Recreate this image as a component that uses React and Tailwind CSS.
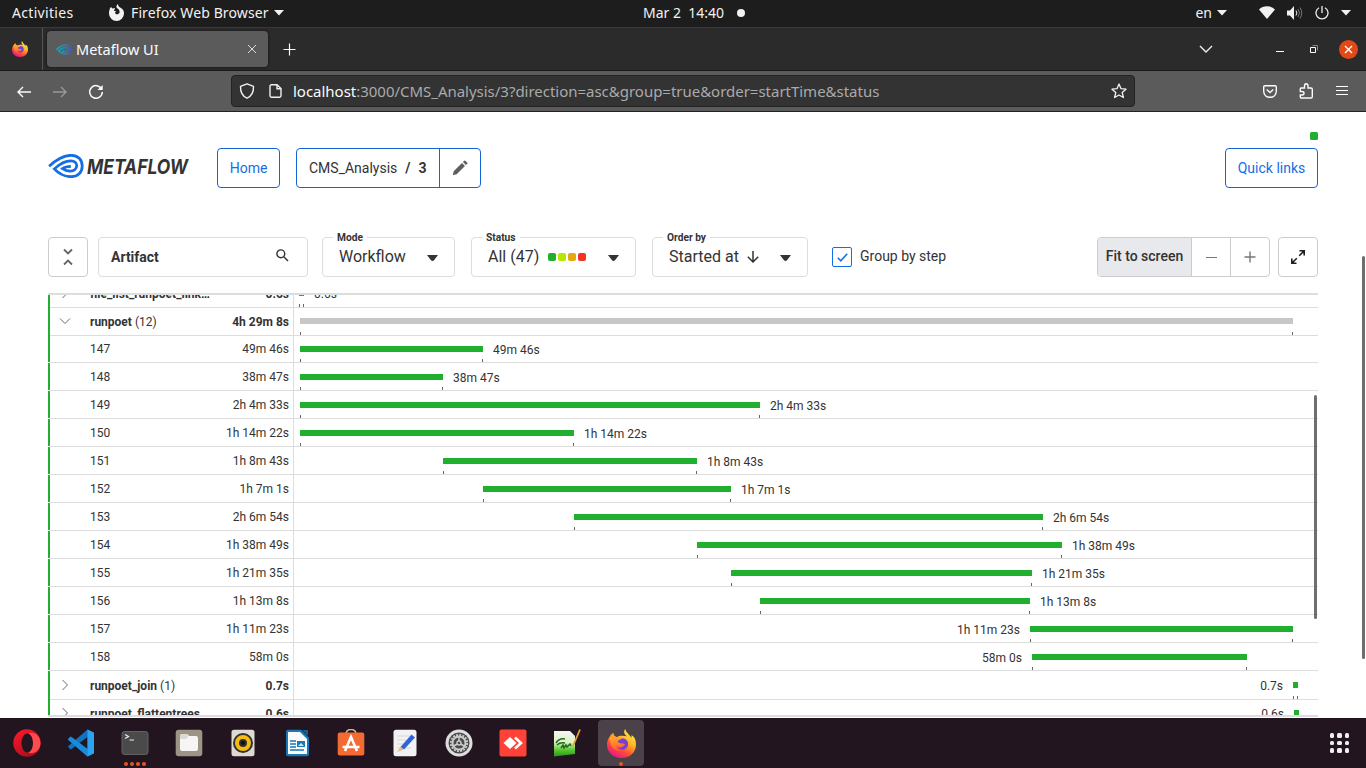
import React from "react";

const TASKS = [
  ["147", "49m 46s", 300, 483, 0],
  ["148", "38m 47s", 300, 443, 0],
  ["149", "2h 4m 33s", 300, 760, 0],
  ["150", "1h 14m 22s", 300, 574, 0],
  ["151", "1h 8m 43s", 443, 697, 0],
  ["152", "1h 7m 1s", 483, 731, 0],
  ["153", "2h 6m 54s", 574, 1043, 0],
  ["154", "1h 38m 49s", 697, 1062, 0],
  ["155", "1h 21m 35s", 731, 1032, 0],
  ["156", "1h 13m 8s", 760, 1030, 0],
  ["157", "1h 11m 23s", 1030, 1293, 1],
  ["158", "58m 0s", 1032, 1247, 1],
];

const ROWS = [
  { name: "file_list_runpoet_link…", dur: "0.6s", x0: 299, x1: 304, label: "0.6s", h: "h-[28px]", top: "pt-[10px]", text: "pt-[6px]", chev: "right", bold: true },
  { name: "runpoet", count: "(12)", dur: "4h 29m 8s", x0: 300, x1: 1293, h: "h-[28px]", top: "pt-[10px]", text: "pt-[6px]", chev: "down", bold: true, grey: true },
  ...TASKS.map(([name, dur, x0, x1, left], i) => ({
    name, dur, x0, x1, left: !!left, label: dur, task: true,
    h: i === 0 ? "h-[27px]" : "h-[28px]",
    top: i === 0 ? "pt-[10px]" : "pt-[11px]",
    text: i === 0 ? "pt-[5px]" : "pt-[6px]",
  })),
  { name: "runpoet_join", count: "(1)", dur: "0.7s", x0: 1293, x1: 1298, left: true, label: "0.7s", h: "h-[29px]", top: "pt-[11px]", text: "pt-[7px]", chev: "right", bold: true },
  { name: "runpoet_flattentrees", dur: "0.6s", x0: 1294, x1: 1299, left: true, label: "0.6s", h: "h-[28px]", top: "pt-[10px]", text: "pt-[6px]", chev: "right", bold: true },
];

function Chevron({ dir }) {
  return (
    <svg width="12" height="12" viewBox="0 0 12 12" fill="none" stroke="#6b6b6b" strokeWidth="1">
      {dir === "down" ? <path d="M1 3.5 6 8.5 11 3.5" /> : <path d="M3.5 1 8.5 6 3.5 11" />}
    </svg>
  );
}

function Row({ r }) {
  const label = r.label && <span className="-mt-[4px] block whitespace-nowrap text-[12px] leading-[16px] text-[#333]">{r.label}</span>;
  return (
    <div className={`flex shrink-0 ${r.h}`}>
      <div className={`w-[2px] shrink-0 bg-[#20af2e] ${r.task ? "mb-px" : ""}`} />
      <div className="flex min-w-0 flex-1 border-b border-[#ddd]">
        <div className={`flex w-[244px] shrink-0 border-r border-[#ddd] pr-[4px] text-[12px] leading-[16px] text-[#333] ${r.text}`}>
          <div className="flex w-[40px] shrink-0 pl-[9px] pt-[1px]">{r.chev && <Chevron dir={r.chev} />}</div>
          <div className="min-w-0 flex-1 whitespace-nowrap">
            <span className={r.bold ? "font-bold" : ""}>{r.name}</span>
            {r.count && <span> {r.count}</span>}
          </div>
          <div className={r.bold ? "font-bold" : ""}>{r.dur}</div>
        </div>
        <div className={`flex min-w-0 flex-1 ${r.top}`}>
          <div className={`flex shrink-0 justify-end ${r.left ? "pr-[10px]" : ""}`} style={{ width: r.x0 - 294 }}>{r.left && label}</div>
          <div className="flex shrink-0 flex-col justify-between" style={{ width: r.x1 - r.x0 }}>
            <div className={`h-[6px] ${r.grey ? "bg-[#c7c7c7]" : "bg-[#20af2e]"}`} />
            <div className="flex justify-between">
              <span className="h-[3px] w-px bg-[#666]" />
              <span className="h-[3px] w-px bg-[#666]" />
            </div>
          </div>
          {!r.left && <div className="flex items-start pl-[10px]">{label}</div>}
        </div>
      </div>
    </div>
  );
}

function Caret({ className = "" }) {
  return (
    <svg className={className} width="10" height="6" viewBox="0 0 10 6">
      <path d="M0 0h10L5 5.5z" fill="#f2f2f2" />
    </svg>
  );
}

function Firefox({ size }) {
  return (
    <svg width={size} height={size} viewBox="0 0 32 32">
      <defs>
        <linearGradient id="fx1" x1=".85" y1=".05" x2=".3" y2="1">
          <stop offset="0" stopColor="#fff44f" />
          <stop offset=".4" stopColor="#ffb021" />
          <stop offset=".7" stopColor="#ff4a3c" />
          <stop offset="1" stopColor="#e5158b" />
        </linearGradient>
        <linearGradient id="fx3" x1=".3" y1="0" x2=".5" y2="1">
          <stop offset="0" stopColor="#ffa828" />
          <stop offset="1" stopColor="#ff5a35" />
        </linearGradient>
      </defs>
      <path d="M20 0c-2 3-1 6 2 8-4-1-9-1-11 1-3-1-4-3-4-5C3 7 0 12 0 17c0 9 7 15 16 15s16-6 16-15c0-5-2-9-5-10v3c-2-4-6-6-7-10z" fill="url(#fx1)" />
      <circle cx="17" cy="16.500" r="6.300" fill="#7440d8" />
      <path d="M3 10c3-3 7-2 9 0 2-1 4-1 5 0-1 2-4 2-5 3 0 2 2 3 4 3 1 0 3 0 4 1-1 2-3 2-4 3-2 1-5 0-6-2 0 3 2 5 6 6-6 2-13-4-13-14z" fill="url(#fx3)" />
    </svg>
  );
}

function Swirl({ className, width, height, stroke, sw = 5.3 }) {
  return (
    <svg className={className} width={width} height={height} viewBox="0 0 108 74" fill="none" stroke={stroke} strokeWidth={sw}>
      <path d="M2 38C24 17 44 4 70 4c21 0 34 14 34 33S91 70 70 70C48 70 29 58 18 46 34 31 50 21 69 21c12 0 18 7 18 15.500S79 53 68 53c-10 0-18-3-25-8 8-6 15-7 26-7" />
    </svg>
  );
}

function TopBar() {
  return (
    <div className="flex h-[28px] items-center border-b border-[#3a3a3a] bg-[#1d1d1d] pb-[2px] font-['Noto_Sans',sans-serif] text-[14px] leading-[20px] text-[#f2f2f2]">
      <div className="w-[108px] pl-[12px] tracking-[0.32px]">Activities</div>
      <svg width="17" height="17" viewBox="0 0 17 17">
        <path fillRule="evenodd" d="M10 0c0 2 1 3 3 4 2 1 3 3 3 5.500A7.500 7.500 0 0 1 1 9.500C1 7 1.500 4.500 3 3l1.500 1.500L7 4 6 7h2L7 9c1 2 4 1.500 4.500-.5S10.500 5 9 4 9 1 10 0z" fill="#f2f2f2" />
      </svg>
      <div className="w-[142px] whitespace-nowrap pl-[6px] tracking-[0.12px]">Firefox Web Browser</div>
      <Caret className="ml-[7px]" />
      <div className="ml-[359px] whitespace-pre">Mar 2  14:40</div>
      <div className="ml-[13px] h-[8px] w-[8px] rounded-full bg-[#f2f2f2]" />
      <div className="ml-auto">en</div>
      <Caret className="ml-[5px]" />
      <svg className="ml-[32px]" width="16" height="13" viewBox="0 0 16 13"><path d="M8 13 0 3.500C4-.8 12-.8 16 3.500z" fill="#f2f2f2" /></svg>
      <svg className="ml-[12px]" width="16" height="14" viewBox="0 0 16 14" fill="none" stroke="#777">
        <path d="M0 4.500h3L7 0v14L3 9.500H0z" fill="#f2f2f2" stroke="none" />
        <path d="M9 4.500q1.800 2.500 0 5" stroke="#f2f2f2" /><path d="M11 3q3 4 0 8M13 1.500q3.500 5.500 0 11" />
      </svg>
      <svg className="ml-[12px]" width="14" height="14" viewBox="0 0 14 14" fill="none" stroke="#eee" strokeWidth="1.300"><path d="M4 1.700a6 6 0 1 0 6 0M7 0v7" /></svg>
      <Caret className="ml-[12px] mr-[15px]" />
    </div>
  );
}

function Browser() {
  return (
    <>
      <div className="flex h-[43px] items-center border-b border-[#191919] bg-[#2b2b2b] font-['Noto_Sans',sans-serif] text-[#fbfbfe]">
        <div className="flex h-full w-[43px] items-center border-r border-[#555] pl-[12px]"><Firefox size={16} /></div>
        <div className="ml-[4px] flex h-[36px] w-[221px] items-center rounded-[4px] bg-[#5b5b5b] pl-[9px] pr-[11px] shadow-[0_0_3px_#111]">
          <svg width="15" height="11" viewBox="0 0 108 74" fill="none" stroke="url(#tabSwirl)" strokeWidth="10">
            <defs><linearGradient id="tabSwirl"><stop offset="0" stopColor="#12abb5" /><stop offset=".6" stopColor="#1c8fc4" /><stop offset="1" stopColor="#3d5be0" /></linearGradient></defs>
            <path d="M2 38C24 17 44 5 70 5c21 0 33 14 33 32S91 69 70 69C48 69 29 58 18 46 34 31 50 23 69 23c12 0 16 6 16 14s-6 14-17 14c-10 0-18-2-25-6" />
          </svg>
          <span className="ml-[5px] text-[14.500px] leading-[20px]">Metaflow UI</span>
          <svg className="ml-auto" width="10" height="10" viewBox="0 0 10 10" stroke="#ddd" strokeWidth="1"><path d="m1 1 8 8M9 1 1 9" /></svg>
        </div>
        <svg className="ml-[15px]" width="13" height="13" viewBox="0 0 13 13" stroke="#fff" strokeWidth="1.200"><path d="M6.500.5v12M.5 6.500h12" /></svg>
        <svg className="ml-auto" width="14" height="8" viewBox="0 0 14 8" fill="none" stroke="#eee" strokeWidth="1.400"><path d="m1 1 6 6 6-6" /></svg>
        <div className="ml-[63px] mt-[4px] h-px w-[8px] bg-white" />
        <svg className="ml-[26px]" width="9" height="9" viewBox="0 0 9 9" fill="none"><path d="M.5 2.500h5v5h-5z" stroke="#fff" /><path d="M2.500.5h5v5" stroke="#888" /></svg>
        <div className="ml-[20px] mr-[8px] flex h-[19px] w-[19px] items-center justify-center rounded-full bg-[#e14a17]">
          <svg width="9" height="9" viewBox="0 0 9 9" stroke="#fff" strokeWidth="1.400"><path d="m1 1 7 7M8 1 1 8" /></svg>
        </div>
      </div>
      <div className="flex h-[41px] items-center border-b border-[#222] bg-[#5b5b5b]">
        <svg className="ml-[17px] mt-px" width="14" height="12" viewBox="0 0 14 12" fill="none" stroke="#fbfbfe" strokeWidth="1.400"><path d="M14 6H1M6 1 1 6l5 5" /></svg>
        <svg className="ml-[22px] mt-px" width="14" height="12" viewBox="0 0 14 12" fill="none" stroke="#999" strokeWidth="1.400"><path d="M0 6h13M8 1l5 5-5 5" /></svg>
        <svg className="ml-[21px] mt-px" width="16" height="16" viewBox="0 0 16 16" fill="none" stroke="#fbfbfe" strokeWidth="1.500"><path d="M13.600 5A6.300 6.300 0 1 0 14.300 8" /><path d="M14.700 1v5H9.500z" fill="#fbfbfe" stroke="none" /></svg>
        <div className="ml-[127px] flex h-[32px] w-[904px] items-center rounded-[4px] border border-[#222] bg-[#333] pl-[7px] pr-[7px] font-['Noto_Sans',sans-serif] text-[15px] leading-[20px] text-[#aaa]">
          <svg width="16" height="16" viewBox="0 0 16 16" fill="none" stroke="#f0f0f0" strokeWidth="1.400"><path d="M8 .8 14.500 3.300C14.700 9 12 13.500 8 15.200 4 13.500 1.300 9 1.500 3.300z" strokeLinejoin="round" /></svg>
          <svg className="ml-[14px]" width="13" height="14" viewBox="0 0 13 14" fill="none" stroke="#f0f0f0" strokeWidth="1.400"><path d="M8 .8H2.500Q1 .8 1 2.300v9.500q0 1.400 1.500 1.400h8q1.500 0 1.500-1.400V4.500zM8 .8v4h4" /></svg>
          <div className="ml-[11px] whitespace-nowrap tracking-[-0.02px]"><span className="text-[#fbfbfe]">localhost</span>:3000/CMS_Analysis/3?direction=asc&amp;group=true&amp;order=startTime&amp;status</div>
          <svg className="ml-auto" width="16" height="16" viewBox="0 0 16 16" fill="none" stroke="#f0f0f0" strokeWidth="1.300" strokeLinejoin="round"><path d="m8 1 2 4.700 5 .5-3.800 3.300 1.200 5L8 12l-4.400 2.500 1.200-5L1 6.200l5-.5z" /></svg>
        </div>
        <svg className="ml-auto" width="14" height="13" viewBox="0 0 14 13" fill="none" stroke="#fbfbfe" strokeWidth="1.400"><path d="M2 .7h10q1.300 0 1.300 1.300v4C13.300 10 10.500 12.300 7 12.300S.7 10 .7 6V2Q.7.700 2 .7zM3.700 4.500 7 7.500l3.300-3" /></svg>
        <svg className="ml-[22px]" width="15" height="16" viewBox="0 0 15 16" fill="none" stroke="#fbfbfe" strokeWidth="1.400"><path d="M2 5h3.500V3Q5.500.8 7.200.8T9 3v2h3q1.300 0 1.300 1.300v7.500q0 1.200-1.300 1.200H2.500q-1.200 0-1.200-1.200V12h1.500Q5 12 5 10.200T2.800 8.500H1.300V6Q1.300 5 2 5z" /></svg>
        <div className="-mt-px ml-[22px] mr-[18px] flex w-[12px] flex-col gap-[3px]">
          <div className="h-px bg-white" /><div className="h-px bg-white" /><div className="h-px bg-white" />
        </div>
      </div>
    </>
  );
}

function Header() {
  return (
    <div className="flex h-[40px] shrink-0 items-center text-[14px]">
      <Swirl className="-mt-[4px]" width={36} height={24} stroke="#146ee6" sw={8.5} />
      <div className="-mt-[4px] ml-[3px] flex h-[24px] w-[102px] items-center">
        <svg width="102" height="24" viewBox="0 0 102 24">
          <text x="0" y="19.500" textLength="101" lengthAdjust="spacingAndGlyphs" fontFamily="Inter, sans-serif" fontSize="20.500" fontWeight="700" fontStyle="italic" fill="#333">METAFLOW</text>
        </svg>
      </div>
      <div className="ml-[28px] flex h-[40px] w-[63px] items-center justify-center rounded-[4px] border border-[#1464d6] text-[#146ee6]">Home</div>
      <div className="ml-[16px] flex h-[40px] w-[185px] rounded-[4px] border border-[#1464d6] text-[#333]">
        <div className="flex w-[143px] items-center whitespace-pre border-r border-[#1464d6] pl-[12px]">CMS_Analysis<span className="ml-[8px] font-bold">/</span><span className="ml-[8px] font-bold">3</span></div>
        <div className="flex flex-1 items-center justify-center">
          <svg width="16" height="16" viewBox="0 0 16 16" fill="#5f5f5f"><path d="M.8 15.200l.9-4L10 3l3 3-8.300 8.200zM10.900 2.100 12.300.700q.5-.5 1 0l2 2q.5.500 0 1l-1.400 1.400z" /></svg>
        </div>
      </div>
      <div className="ml-auto flex h-[40px] w-[93px] items-center justify-center rounded-[4px] border border-[#1464d6] text-[#146ee6]">Quick links</div>
    </div>
  );
}

function Field({ title, width, children, ml }) {
  return (
    <div className={`relative h-[40px] rounded-[4px] border border-[#ddd] ${width} ${ml}`}>
      <span className="absolute -top-[7px] left-[10px] bg-white px-[4px] text-[10.200px] font-bold leading-[14px] text-[#333]">{title}</span>
      <div className="flex h-[38px] items-center pl-[16px] pr-[16px] text-[16px] text-[#333]">
        {children}
        <svg className="ml-auto mt-[2px]" width="11" height="6" viewBox="0 0 11 6"><path d="M0 0h11L7 5.300q-1.500 1.200-3 0z" fill="#333" /></svg>
      </div>
    </div>
  );
}

function Filters() {
  return (
    <div className="mt-[49px] flex h-[40px] shrink-0 items-center">
      <div className="flex h-[40px] w-[40px] items-center justify-center rounded-[4px] border border-[#ccc]">
        <svg width="10" height="18" viewBox="0 0 10 18" fill="none" stroke="#666" strokeWidth="1.800"><path d="m1 1.500 4 4 4-4M1 16.500l4-4 4 4" /></svg>
      </div>
      <div className="ml-[10px] flex h-[40px] w-[210px] items-center justify-between rounded-[4px] border border-[#ddd] pl-[12px] pr-[18px] text-[14px] font-bold text-[#333]">
        Artifact
        <svg className="-mt-[3px]" width="13" height="13" viewBox="0 0 13 13" fill="none" stroke="#333" strokeWidth="1.400"><circle cx="4.800" cy="4.800" r="3.900" /><path d="m7.800 7.800 4.200 4.200" /></svg>
      </div>
      <Field title="Mode" width="w-[133px]" ml="ml-[14px]">Workflow</Field>
      <Field title="Status" width="w-[165px]" ml="ml-[16px]">
        All (47)
        <div className="ml-[9px] flex gap-[2px]">
          <i className="h-[8px] w-[8px] rounded-[2px] bg-[#20af2e]" />
          <i className="h-[8px] w-[8px] rounded-[2px] bg-[#b9e600]" />
          <i className="h-[8px] w-[8px] rounded-[2px] bg-[#e6a80c]" />
          <i className="h-[8px] w-[8px] rounded-[2px] bg-[#ee3524]" />
        </div>
      </Field>
      <Field title="Order by" width="w-[156px]" ml="ml-[16px]">
        Started at
        <svg className="ml-[8px]" width="12" height="12" viewBox="0 0 12 12" fill="none" stroke="#333" strokeWidth="1.500"><path d="M6 0v11M.8 5.800 6 11l5.200-5.200" /></svg>
      </Field>
      <div className="ml-[24px] flex h-[20px] w-[20px] items-center justify-center rounded-[2px] border border-[#146ee6]">
        <svg width="11" height="9" viewBox="0 0 11 9" fill="none" stroke="#146ee6" strokeWidth="1.600"><path d="m.8 4.800 3 3 6.400-7" /></svg>
      </div>
      <div className="-mt-[2px] ml-[8px] text-[14px] text-[#333]">Group by step</div>
      <div className="ml-auto flex h-[40px] w-[173px] overflow-hidden rounded-[4px] border border-[#ccc] text-[14px] text-[#333]">
        <div className="flex w-[94px] items-center justify-center border-r border-[#ccc] bg-[#e8e9ed] pb-[2px] font-medium">Fit to screen</div>
        <div className="flex w-[39px] items-center justify-center border-r border-[#ccc]"><div className="h-px w-[11px] bg-[#777]" /></div>
        <div className="flex flex-1 items-center justify-center"><svg width="12" height="12" viewBox="0 0 12 12" stroke="#777" strokeWidth="1.400"><path d="M6 .5v11M.5 6h11" /></svg></div>
      </div>
      <div className="ml-[8px] flex h-[40px] w-[40px] items-center justify-center rounded-[4px] border border-[#ccc]">
        <svg width="14" height="14" viewBox="0 0 14 14" fill="none" stroke="#222" strokeWidth="1.600"><path d="M8.500.8h4.700v4.700M.8 8.500v4.700h4.700M13 1 8.200 5.800M1 13l4.800-4.800" /><path d="M10 .500h3.500v3.500zM.5 10v3.500h3.500z" fill="#222" stroke="none" /></svg>
      </div>
    </div>
  );
}

const S = (p) => <svg width="28" height="28" viewBox="0 0 28 28" {...p} />;

function Dock() {
  return (
    <div className="flex h-[50px] shrink-0 items-start bg-[#23151f] pl-[4px]">
      <div className="flex pt-[2px]">
        <Slot>
          <S>
            <defs><linearGradient id="op" x1="0" y1="0" x2=".6" y2="1"><stop offset="0" stopColor="#ff1b2d" /><stop offset="1" stopColor="#b00c1c" /></linearGradient></defs>
            <path fillRule="evenodd" d="M14 .3a13.700 13.700 0 1 0 0 27.400A13.700 13.700 0 0 0 14 .3zM14.500 4.500c3.300 0 5.500 4 5.500 9.500s-2.200 9.500-5.500 9.500S8.500 19.500 8.500 14s2.700-9.500 6-9.500z" fill="url(#op)" />
            <path d="M15 4.500c5-2.500 12.500 1.500 12.500 9.500S20 26 15 23.500c3-.5 5-4.500 5-9.500s-2-9-5-9.500z" fill="#ff4a4e" />
          </S>
        </Slot>
        <Slot>
          <S>
            <path d="M20.500.5 27 3.800v20.400l-6.500 3.300L.8 10.500 3 8q.7-.6 1.500 0l16 12V8l-16 12q-.8.600-1.500 0L.8 17.500z" fill="#0f74bd" />
            <path d="M20.500 27.500.8 10.500 3 8q.7-.6 1.500 0l16 12z" fill="#1a8bd8" />
            <path d="M20.500.5 27 3.800v20.400l-6.500 3.300z" fill="#2aa3f0" />
          </S>
        </Slot>
        <Slot dots={4}><S><rect x="1" y="2.500" width="26" height="23" rx="2.500" fill="#4a4a4a" stroke="#626262" /><path d="m4 5.500 3.500 2L4 9.500M8.500 11h4.500" fill="none" stroke="#eee" strokeWidth="1.200" /></S></Slot>
        <Slot><S><rect x=".7" y=".7" width="26.600" height="26.600" rx="3" fill="#9c9484" /><path d="M5 7q0-2 2-2h5l2 2h7q2 0 2 2v11q0 2-2 2H7q-2 0-2-2z" fill="#f6f5f3" /><path d="M5 10V7q0-2 2-2h5l1 3-2 2z" fill="#ddd9d2" /></S></Slot>
        <Slot><S><rect x="2.500" y=".7" width="23" height="26.600" rx="2.500" fill="#dedad2" /><circle cx="14" cy="14" r="10" fill="#303030" /><circle cx="14" cy="14" r="6" fill="none" stroke="#f5bd12" strokeWidth="4" /><circle cx="14" cy="14" r="2" fill="#111" /></S></Slot>
        <Slot><S><path d="M5 .7h13l8 8v16.600q0 2-2 2H5q-2 0-2-2V2.700q0-2 2-2z" fill="#1878b8" /><path d="M5 3h12l7 7v15H5z" fill="#fafafa" /><path d="M19 1h6v6z" fill="#125f94" /><path d="M7 12h6M7 15h6M7 18h6M7 21h14" stroke="#1878b8" strokeWidth="1.500" /><rect x="14" y="12" width="8" height="6" fill="#1878b8" /><path d="m15 17 3-3 3 3z" fill="#ddd" /></S></Slot>
        <Slot><S><path d="M9 5.500q0-5 5-5t5 5" fill="none" stroke="#cdb594" strokeWidth="1.500" /><rect x=".7" y="3.500" width="26.600" height="23" rx="2" fill="#f36a32" /><path d="m8 22 6-14 6 14M5.500 18h17" fill="none" stroke="#fff" strokeWidth="2.600" /></S></Slot>
        <Slot><S><rect x="2.500" y=".7" width="23" height="26.600" rx="2.500" fill="#f2f2f2" /><path d="M6 7h13M6 11h12M6 15h10M6 19h14" stroke="#d8d8d8" /><path d="m9.500 18 11-12.500 3.500 3L13 20.500z" fill="#2f63d8" /><path d="M9.500 18 6 23l7-2.500z" fill="#e6bd90" /></S></Slot>
        <Slot><S><circle cx="14" cy="14" r="13.500" fill="#dedede" /><circle cx="14" cy="14" r="10.500" fill="#4a4a4a" /><circle cx="14" cy="14" r="8.200" fill="none" stroke="#ccc" strokeWidth="1.800" strokeDasharray="2 1.220" /><circle cx="14" cy="14" r="6.500" fill="none" stroke="#ccc" strokeWidth="2" /><path d="M14 14V7.500M14 14l5.600 3.250M14 14l-5.600 3.250" stroke="#ccc" strokeWidth="1.500" /><circle cx="14" cy="14" r="2.700" fill="#ccc" /><circle cx="14" cy="14" r="1.300" fill="#4a4a4a" /></S></Slot>
        <Slot><S><rect x=".5" y=".5" width="27" height="27" rx="2" fill="#ff4238" /><path d="m4.500 14 6.500-6 6.500 6-6.500 6z" fill="#fff" /><path d="m16 8.500 6 5.500-6 5.500" fill="none" stroke="#fff" strokeWidth="2.600" /></S></Slot>
        <Slot>
          <S>
            <defs><linearGradient id="npp" x2="0" y2="1"><stop offset="0" stopColor="#f4f6f0" /><stop offset=".45" stopColor="#dff0c8" /><stop offset=".75" stopColor="#58c62c" /><stop offset="1" stopColor="#2b9420" /></linearGradient></defs>
            <path d="M1 2h16l5 5v18L1 27.500z" fill="url(#npp)" />
            <path d="M3 14q3-5 9-4M4 16q3-3 8-2M8 19l2-3 1 3 2-3 1 2 3-3 1 2" fill="none" stroke="#1f6b18" strokeWidth="1.500" />
            <path d="M20 17 27 .5" stroke="#dfa12c" strokeWidth="1.800" />
          </S>
        </Slot>
        <Slot active dots={1}><Firefox size={29} /></Slot>
      </div>
      <div className="ml-auto mr-[17px] mt-[15px] grid grid-cols-3 gap-[3px]">
        {[0, 1, 2, 3, 4, 5, 6, 7, 8].map((i) => <span key={i} className="h-[4.500px] w-[4.500px] rounded-[1.500px] bg-[#eee]" />)}
      </div>
    </div>
  );
}

function Slot({ children, active, dots = 0 }) {
  return (
    <div className={`mr-[8px] flex h-[46px] w-[46px] flex-col items-center rounded-[4px] pt-[9px] ${active ? "bg-[#4b4149]" : ""}`}>
      <div className="flex h-[28px] items-center">{children}</div>
      <div className="mt-[5px] flex gap-[2px]">
        {Array.from({ length: dots }, (_, i) => <span key={i} className="h-[4px] w-[4px] rounded-full bg-[#e95420]" />)}
      </div>
    </div>
  );
}

export default function App() {
  return (
    <div className="flex h-[768px] w-[1366px] flex-col overflow-hidden bg-white font-['Roboto',sans-serif]">
      <TopBar />
      <Browser />
      <div className="flex min-h-0 flex-1">
        <div className="flex w-[1318px] flex-col pl-[48px]">
          <div className="mb-[8px] ml-auto mt-[20px] h-[8px] w-[8px] shrink-0 rounded-[1.500px] bg-[#20af2e]" />
          <Header />
          <Filters />
          <div className="relative mt-[16px] flex h-[424px] shrink-0 flex-col justify-start overflow-hidden border-y-2 border-[#ddd]">
            <div className="-mt-[15px] flex flex-col">
              {ROWS.map((r) => <Row key={r.name} r={r} />)}
            </div>
            <div className="absolute right-[1px] top-[100px] h-[224px] w-[3px] rounded-full bg-[#6e6e6e]" />
          </div>
        </div>
        <div className="ml-auto mr-[1px] mt-[144px] h-[403px] w-[3px] rounded-full bg-[#6e6e6e]" />
      </div>
      <Dock />
    </div>
  );
}
